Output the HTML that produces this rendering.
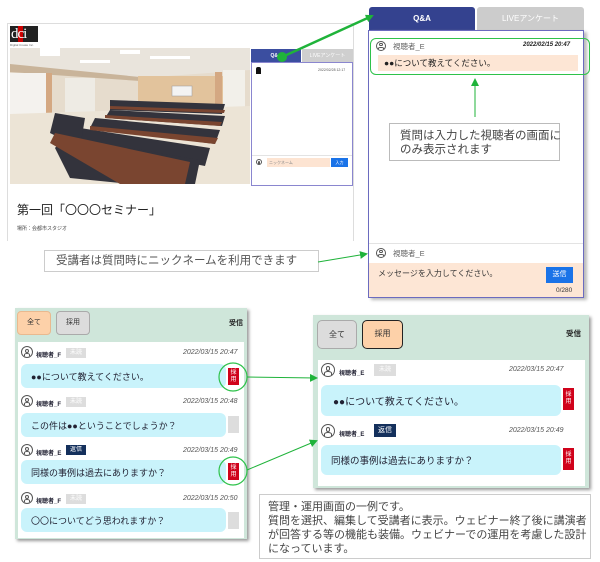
<!DOCTYPE html>
<html><head><meta charset="utf-8"><style>
*{margin:0;padding:0;box-sizing:border-box}
body{width:600px;height:562px;background:#fff;position:relative;overflow:hidden;font-family:"Liberation Sans","Noto Sans CJK JP",sans-serif;color:#333}
.a{position:absolute}
.t{white-space:nowrap}
.ic{position:absolute;border:1.5px solid #555;border-radius:50%;background:#fff}
.ic::before{content:"";position:absolute;left:30%;top:15%;width:40%;height:40%;border:1.3px solid #555;border-radius:50%;box-sizing:border-box}
.ic::after{content:"";position:absolute;left:18%;top:58%;width:64%;height:35%;border:1.3px solid #555;border-bottom:none;border-radius:50% 50% 0 0;box-sizing:border-box}
.red{position:absolute;background:#d0021b;color:#fff;font-size:6px;line-height:7px;text-align:center;padding-top:2px}
.gb{position:absolute;background:#ddd;color:#fff;font-size:6px;text-align:center;line-height:10px}
.bub{position:absolute;background:#c9f3fb;border-radius:6px;font-size:9px;color:#223;padding-left:10px;display:flex;align-items:center}
.nm{position:absolute;font-size:6px;color:#223;font-weight:bold}
.dt{position:absolute;font-size:7px;color:#555;font-style:italic}
</style></head><body>

<div class="a" style="left:7px;top:23px;width:347px;height:218px;border:1px solid #ddd;border-bottom:none;background:#fff"></div>
<div class="a" style="left:10px;top:26px;width:28px;height:16px;background:#222;color:#fff;font-family:'Liberation Serif',serif;font-size:15px;line-height:16px;letter-spacing:-1px;padding-left:1px">d<span style="background:#c00">c</span>i</div>
<div class="a" style="left:10px;top:43px;font-size:3px;color:#666">Digital Create Inc.</div>
<svg class="a" style="left:10px;top:48px" width="240" height="136" viewBox="0 0 240 136">
<rect width="240" height="136" fill="#e6dccd"/>
<polygon points="0,0 240,0 240,22 130,30 0,22" fill="#e9e4dc"/>
<polygon points="0,16 130,29 130,33 0,24" fill="#c9b49a"/>
<rect x="0" y="25" width="38" height="45" fill="#f4f2ee"/>
<rect x="55" y="30" width="30" height="35" fill="#eeebe4"/>
<rect x="128" y="28" width="85" height="32" fill="#e2c39c"/>
<rect x="213" y="22" width="22" height="45" fill="#f2f0ea"/>
<rect x="162" y="38" width="20" height="10" fill="#f3f3f3" stroke="#999" stroke-width=".5"/>
<rect x="36" y="25" width="6" height="45" fill="#d4a882"/>
<rect x="205" y="24" width="7" height="44" fill="#d4a882"/>
<polygon points="0,66 240,58 240,136 0,136" fill="#ece4d6"/>
<g fill="#33333c">
<polygon points="100,52 215,56 212,66 100,62"/>
<polygon points="100,62 215,68 212,78 95,70"/>
<polygon points="85,70 210,82 205,96 80,80"/>
<polygon points="70,80 200,100 195,118 60,92"/>
<polygon points="45,65 75,70 70,100 40,85"/>
<polygon points="55,88 130,110 120,136 60,130 45,100"/>
<polygon points="120,100 190,112 185,136 130,136"/>
</g>
<g fill="#7a4530">
<polygon points="100,58 215,62 214,65 100,61"/>
<polygon points="95,67 212,74 210,78 95,70"/>
<polygon points="80,78 208,90 205,96 80,82"/>
<polygon points="45,85 180,114 175,136 110,136 40,95"/>
</g>
<rect x="30" y="0" width="20" height="8" fill="#fff"/><rect x="110" y="2" width="20" height="4" fill="#fff"/><rect x="140" y="8" width="40" height="3" fill="#fff"/><rect x="70" y="12" width="30" height="3" fill="#fff"/>
</svg>
<div class="a" style="left:251px;top:49px;width:50px;height:14px;background:#3b4ea0;color:#fff;font-size:5px;text-align:center;line-height:14px;font-weight:bold">Q&amp;A</div>
<div class="a" style="left:302px;top:49px;width:51px;height:14px;background:#cfcfcf;color:#fff;font-size:5px;text-align:center;line-height:14px">LIVEアンケート</div>
<div class="a" style="left:251px;top:62px;width:102px;height:124px;border:1px solid #8a86cf;background:#fff"></div>
<div class="a" style="left:256px;top:67px;width:5px;height:7px;background:#111;border-radius:2px 2px 0 0"></div>
<div class="a t" style="left:318px;top:68px;font-size:3.5px;color:#555">2022/02/28 12:17</div>
<div class="a" style="left:252px;top:155px;width:100px;height:1px;background:#e3e3e3"></div>
<div class="ic" style="left:256px;top:159px;width:6px;height:6px;border-width:1px"></div>
<div class="a" style="left:267px;top:158px;width:63px;height:9px;background:#fde4d2;font-size:4px;color:#888;line-height:9px;padding-left:2px">ニックネーム</div>
<div class="a" style="left:331px;top:158px;width:17px;height:9px;background:#1a73e8;color:#fff;font-size:4px;text-align:center;line-height:9px">入力</div>
<div class="a t" style="left:17px;top:201px;font-size:12px;color:#222">第一回「〇〇〇セミナー」</div>
<div class="a t" style="left:17px;top:225px;font-size:5px;color:#444">場所：会都市スタジオ</div>

<div class="a t" style="left:44px;top:250px;width:275px;height:22px;border:1px solid #ccc;font-size:11.5px;color:#555;line-height:20px;padding-left:11px">受講者は質問時にニックネームを利用できます</div>

<div class="a" style="left:369px;top:7px;width:106px;height:24px;background:#34428f;border-radius:3px 3px 0 0;color:#fff;font-size:8px;font-weight:bold;text-align:center;line-height:24px">Q&amp;A</div>
<div class="a" style="left:477px;top:7px;width:107px;height:23px;background:#ccc;border-radius:3px 3px 0 0;color:#fff;font-size:8px;text-align:center;line-height:23px">LIVEアンケート</div>
<div class="a" style="left:368px;top:30px;width:216px;height:268px;border:1.5px solid #6b6bbf;background:#fff;box-shadow:3px 2px 3px #bbb"></div>
<div class="a" style="left:370px;top:38px;width:220px;height:37px;border:1.5px solid #2ec24a;border-radius:6px"></div>
<div class="ic" style="left:376px;top:41px;width:10px;height:10px"></div>
<div class="a t" style="left:393px;top:41px;font-size:7.5px;color:#666">視聴者_E</div>
<div class="a t" style="left:523px;top:42px;font-size:6px;color:#222;font-style:italic;font-weight:bold">2022/02/15 20:47</div>
<div class="a t" style="left:378px;top:55px;width:200px;height:16px;background:#fde6d5;font-size:8.5px;color:#222;line-height:16px;padding-left:6px">●●について教えてください。</div>
<div class="a t" style="left:389px;top:123px;width:171px;height:38px;border:1px solid #bbb;background:#fff;font-size:11.5px;line-height:14px;padding:5px 0 0 10px;color:#444">質問は入力した視聴者の画面に<br>のみ表示されます</div>
<div class="a" style="left:369px;top:243px;width:214px;height:1px;background:#e3e3e3"></div>
<div class="ic" style="left:376px;top:248px;width:10px;height:10px"></div>
<div class="a t" style="left:393px;top:248px;font-size:7.5px;color:#666">視聴者_E</div>
<div class="a t" style="left:369px;top:263px;width:214px;height:34px;background:#fde6d5;font-size:8px;color:#333;padding:5px 0 0 9px">メッセージを入力してください。</div>
<div class="a" style="left:546px;top:267px;width:27px;height:16px;background:#1a73e8;color:#fff;font-size:7px;text-align:center;line-height:16px">送信</div>
<div class="a t" style="left:556px;top:287px;font-size:6.5px;color:#333">0/280</div>

<div class="a" style="left:15px;top:308px;width:232px;height:231px;background:#cfe6da;box-shadow:2px 2px 3px #999"></div>
<div class="a" style="left:17px;top:311px;width:34px;height:24px;background:#fdd1a9;border:1px solid #e9b98f;border-radius:4px;font-size:7px;text-align:center;line-height:22px">全て</div>
<div class="a" style="left:56px;top:311px;width:34px;height:24px;background:#dcdcdc;border:1px solid #aaa;border-radius:4px;font-size:7px;text-align:center;line-height:22px">採用</div>
<div class="a t" style="left:229px;top:318px;font-size:7px;font-weight:bold;color:#222">受信</div>
<div class="a" style="left:18px;top:342px;width:226px;height:196px;background:#fff"></div>

<div class="ic" style="left:21px;top:346px;width:12px;height:12px"></div><div class="nm" style="left:36px;top:350px">視聴者_F</div><div class="gb" style="left:66px;top:348px;width:20px;height:10px">未読</div><div class="dt" style="left:183px;top:349px">2022/03/15 20:47</div>
<div class="bub" style="left:21px;top:364px;width:205px;height:24px">●●について教えてください。</div>
<div class="red" style="left:228px;top:368px;width:11px;height:17px">採<br>用</div>

<div class="ic" style="left:21px;top:395px;width:12px;height:12px"></div><div class="nm" style="left:36px;top:399px">視聴者_F</div><div class="gb" style="left:66px;top:397px;width:20px;height:10px">未読</div><div class="dt" style="left:183px;top:398px">2022/03/15 20:48</div>
<div class="bub" style="left:21px;top:413px;width:205px;height:24px">この件は●●ということでしょうか？</div>
<div class="gb" style="left:228px;top:416px;width:11px;height:17px"></div>

<div class="ic" style="left:21px;top:444px;width:12px;height:12px"></div><div class="nm" style="left:36px;top:448px">視聴者_E</div><div class="gb" style="left:66px;top:445px;width:20px;height:10px;background:#14305c">返信</div><div class="dt" style="left:183px;top:447px">2022/03/15 20:49</div>
<div class="bub" style="left:21px;top:460px;width:205px;height:24px">同様の事例は過去にありますか？</div>
<div class="red" style="left:228px;top:463px;width:11px;height:17px">採<br>用</div>

<div class="ic" style="left:21px;top:492px;width:12px;height:12px"></div><div class="nm" style="left:36px;top:496px">視聴者_F</div><div class="gb" style="left:66px;top:494px;width:20px;height:10px">未読</div><div class="dt" style="left:183px;top:495px">2022/03/15 20:50</div>
<div class="bub" style="left:21px;top:508px;width:205px;height:24px">〇〇についてどう思われますか？</div>
<div class="gb" style="left:228px;top:512px;width:11px;height:17px"></div>

<div class="a" style="left:313px;top:315px;width:276px;height:173px;background:#cfe6da;box-shadow:2px 2px 3px #999"></div>
<div class="a" style="left:317px;top:320px;width:40px;height:29px;background:#dcdcdc;border:1px solid #aaa;border-radius:5px;font-size:8px;text-align:center;line-height:27px">全て</div>
<div class="a" style="left:362px;top:320px;width:41px;height:29px;background:#fdd1a9;border:1.5px solid #222;border-radius:5px;font-size:8px;text-align:center;line-height:26px">採用</div>
<div class="a t" style="left:566px;top:328px;font-size:7.5px;font-weight:bold;color:#222">受信</div>
<div class="a" style="left:318px;top:360px;width:267px;height:126px;background:#fff"></div>
<div class="ic" style="left:321px;top:363px;width:14px;height:14px"></div><div class="nm" style="left:339px;top:368px">視聴者_E</div><div class="gb" style="left:374px;top:364px;width:22px;height:12px;line-height:12px">未読</div><div class="dt" style="left:509px;top:366px">2022/03/15 20:47</div>
<div class="bub" style="left:321px;top:385px;width:240px;height:31px;font-size:10px;padding-left:12px">●●について教えてください。</div>
<div class="red" style="left:563px;top:388px;width:11px;height:22px;padding-top:4px">採<br>用</div>
<div class="ic" style="left:321px;top:424px;width:14px;height:14px"></div><div class="nm" style="left:339px;top:429px">視聴者_E</div><div class="gb" style="left:374px;top:424px;width:22px;height:13px;line-height:13px;background:#14305c;font-size:7px">返信</div><div class="dt" style="left:509px;top:427px">2022/03/15 20:49</div>
<div class="bub" style="left:321px;top:445px;width:240px;height:30px;font-size:9.5px">同様の事例は過去にありますか？</div>
<div class="red" style="left:563px;top:448px;width:11px;height:22px;padding-top:4px">採<br>用</div>

<div class="a" style="left:259px;top:494px;width:332px;height:65px;border:1px solid #ccc;background:#fff;font-size:11px;line-height:14px;padding:5px 0 0 8px;color:#444;white-space:nowrap">管理・運用画面の一例です。<br>質問を選択、編集して受講者に表示。ウェビナー終了後に講演者<br>が回答する等の機能も装備。ウェビナーでの運用を考慮した設計<br>になっています。</div>

<svg class="a" style="left:0;top:0" width="600" height="562">
<defs><marker id="ar" markerWidth="8" markerHeight="8" refX="6" refY="4" orient="auto" markerUnits="userSpaceOnUse"><path d="M0,0 L8,4 L0,8z" fill="#1fb33a"/></marker></defs>
<line x1="282" y1="57" x2="372" y2="16" stroke="#1fb33a" stroke-width="2.5" marker-end="url(#ar)"/>
<circle cx="282" cy="57" r="5" fill="#1fb33a"/>
<line x1="318" y1="262" x2="366" y2="254" stroke="#1fb33a" stroke-width="1" marker-end="url(#ar)"/>
<line x1="475" y1="117" x2="475" y2="80" stroke="#1fb33a" stroke-width="1" marker-end="url(#ar)"/>
<circle cx="233" cy="377" r="14" fill="none" stroke="#2ec24a" stroke-width="1.2"/>
<circle cx="233" cy="471" r="14" fill="none" stroke="#2ec24a" stroke-width="1.2"/>
<line x1="247" y1="377" x2="316" y2="378" stroke="#1fb33a" stroke-width="1" marker-end="url(#ar)"/>
<line x1="247" y1="470" x2="316" y2="441" stroke="#1fb33a" stroke-width="1" marker-end="url(#ar)"/>
</svg>
</body></html>
